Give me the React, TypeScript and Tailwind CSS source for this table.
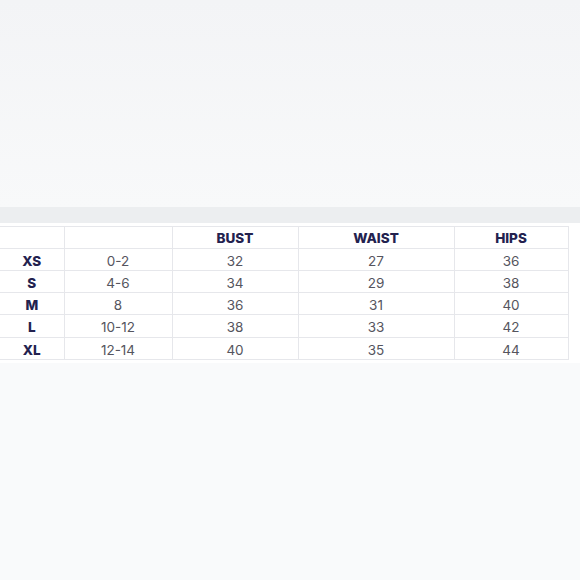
import React from "react";

const rows = [
  ["XS", "0-2", "32", "27", "36"],
  ["S", "4-6", "34", "29", "38"],
  ["M", "8", "36", "31", "40"],
  ["L", "10-12", "38", "33", "42"],
  ["XL", "12-14", "40", "35", "44"],
];

const widths = ["w-[64px]", "w-[108px]", "w-[126px]", "w-[156px]", "w-[114px]"];

export default function App() {
  return (
    <div
      className="flex h-[580px] w-[580px] flex-col bg-[#f9fafb]"
      style={{ fontFamily: "Inter, 'Open Sans', sans-serif" }}
    >
      <div className="h-[207px] bg-gradient-to-b from-[#f3f4f6] to-[#f8f9fa]" />
      <div className="h-[16px] bg-[#eceef0]" />
      <div className="bg-white pt-[3px] pb-[3px]">
        <table className="table-fixed border-collapse text-center text-[13.5px] leading-[18px]">
          <thead>
            <tr className="h-[22px]">
              {["", "", "BUST", "WAIST", "HIPS"].map((h, i) => (
                <th
                  key={i}
                  className={`${widths[i]} border border-[#e6e7eb] p-0 pt-[1px] font-extrabold text-[#23224f] ${
                    i === 0 ? "border-l-0" : ""
                  }`}
                >
                  {h}
                </th>
              ))}
            </tr>
          </thead>
          <tbody>
            {rows.map((r, ri) => (
              <tr key={r[0]} className={ri === 3 ? "h-[23px]" : "h-[22px]"}>
                {r.map((c, i) => (
                  <td
                    key={i}
                    className={`border border-[#e6e7eb] p-0 pt-[2px] ${
                      i === 0
                        ? "border-l-0 font-extrabold text-[#23224f]"
                        : "text-[#55555e]"
                    }`}
                  >
                    {c}
                  </td>
                ))}
              </tr>
            ))}
          </tbody>
        </table>
      </div>
      <div className="flex-1 bg-[#f9fafb]" />
    </div>
  );
}
